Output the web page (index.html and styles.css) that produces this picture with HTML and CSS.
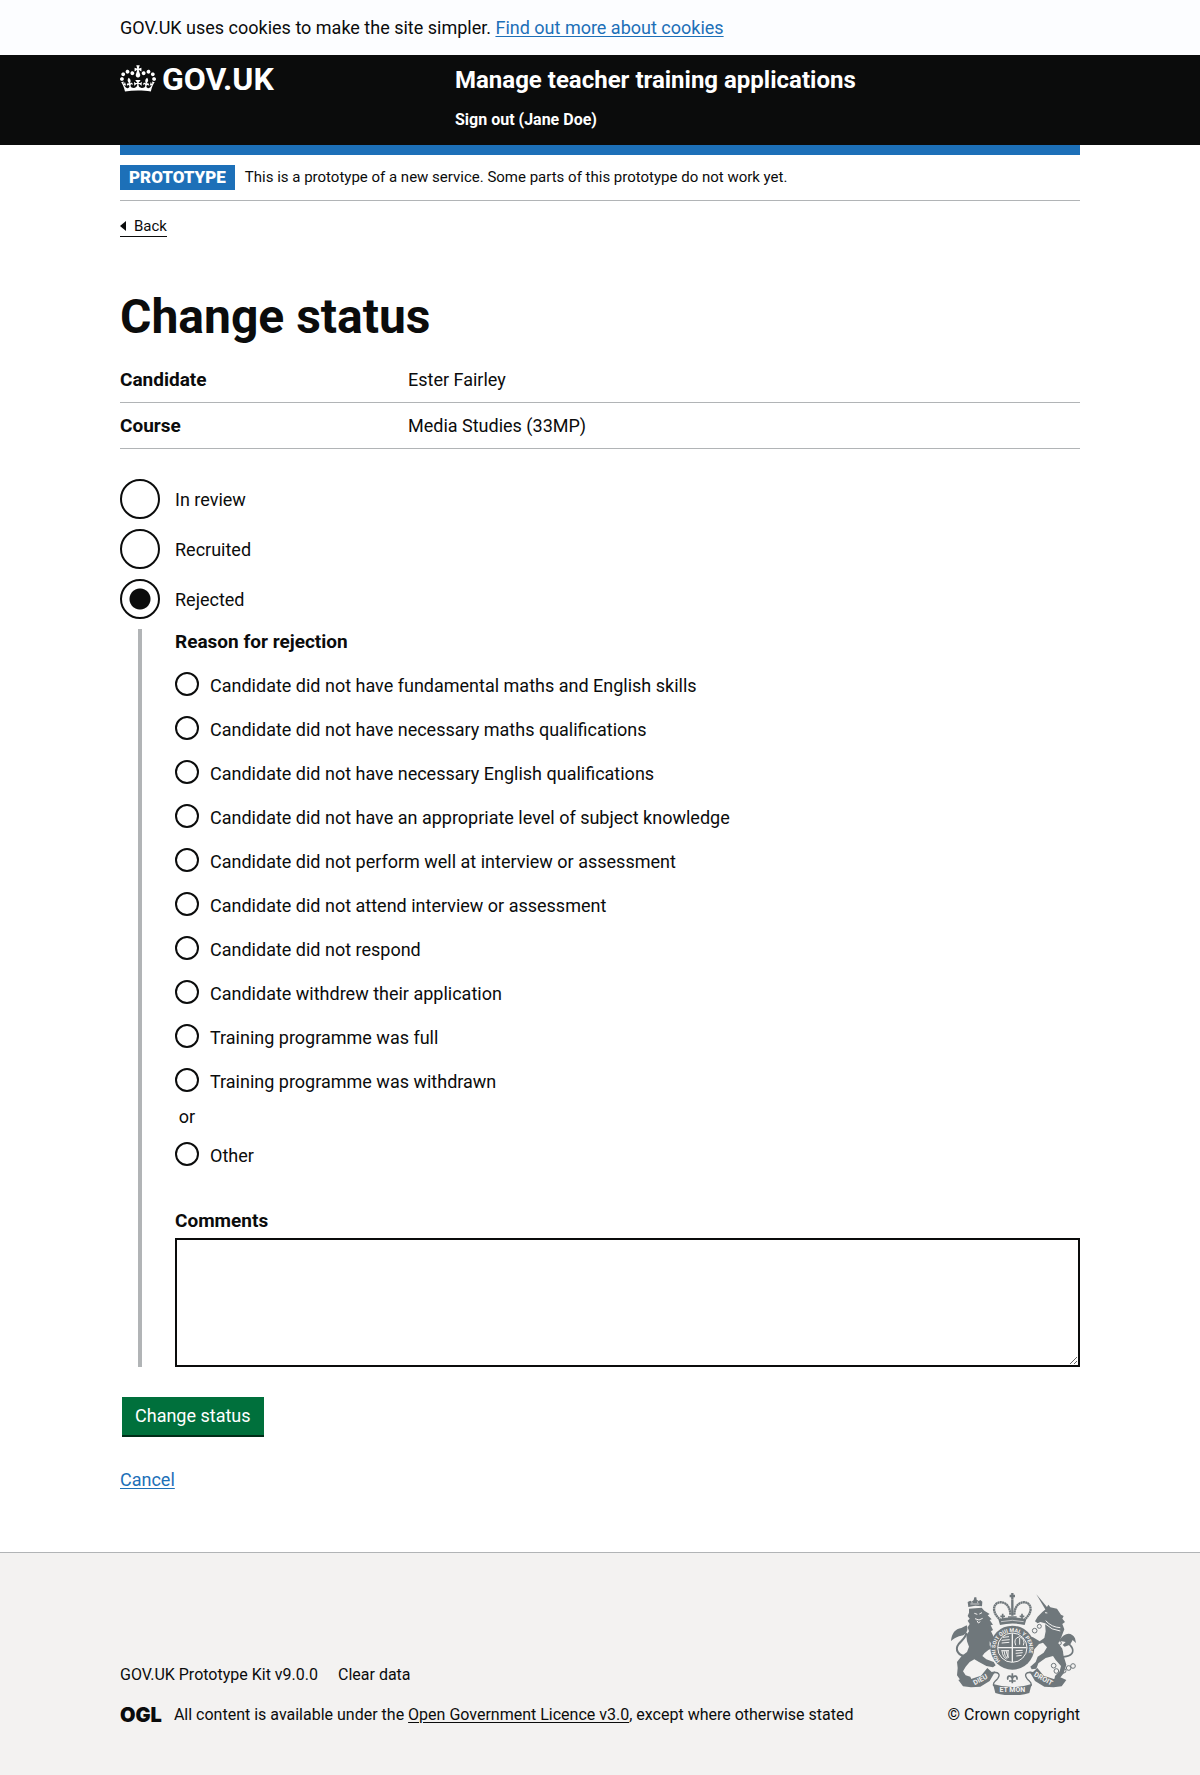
FILE: index.html
```html
<!DOCTYPE html>
<html lang="en">
<head>
<meta charset="utf-8">
<meta name="viewport" content="width=device-width, initial-scale=1">
<title>Change status - Manage teacher training applications</title>
<link rel="stylesheet" href="styles.css">
</head>
<body>
<div class="cookie-banner">
  <p class="container">GOV.UK uses cookies to make the site simpler. <a class="link" href="#cookies">Find out more about cookies</a></p>
</div>

<header class="header">
  <div class="container header-inner">
    <a class="logo" href="#home">
      <svg class="logo-crown" viewBox="0 0 132 97" aria-hidden="true"><path fill="currentColor" fill-rule="evenodd" d="M25 30.2c3.5 1.5 7.7-.2 9.1-3.7 1.5-3.6-.2-7.8-3.9-9.2-3.6-1.4-7.6.3-9.1 3.9-1.4 3.5.3 7.5 3.9 9zM9 39.5c3.6 1.5 7.8-.2 9.2-3.7 1.5-3.6-.2-7.8-3.9-9.1-3.6-1.5-7.6.2-9.1 3.8-1.4 3.5.3 7.5 3.8 9zM4.4 57.2c3.5 1.5 7.7-.2 9.1-3.8 1.5-3.6-.2-7.7-3.9-9.1-3.5-1.5-7.6.3-9.1 3.8-1.4 3.5.3 7.6 3.9 9.1zm38.3-21.4c3.5 1.5 7.7-.2 9.1-3.8 1.5-3.6-.2-7.7-3.9-9.1-3.6-1.5-7.6.3-9.1 3.8-1.3 3.6.4 7.7 3.9 9.1zm64.4-5.6c-3.6 1.5-7.8-.2-9.1-3.7-1.5-3.6.2-7.8 3.8-9.2 3.6-1.4 7.7.3 9.2 3.9 1.3 3.5-.4 7.5-3.9 9zm15.9 9.3c-3.6 1.5-7.7-.2-9.1-3.7-1.5-3.6.2-7.8 3.7-9.1 3.6-1.5 7.7.2 9.2 3.8 1.5 3.5-.3 7.5-3.8 9zm4.7 17.7c-3.6 1.5-7.8-.2-9.2-3.8-1.5-3.6.2-7.7 3.9-9.1 3.6-1.5 7.7.3 9.2 3.8 1.3 3.5-.4 7.6-3.9 9.1zM89.3 35.8c-3.6 1.5-7.8-.2-9.2-3.8-1.4-3.6.2-7.7 3.9-9.1 3.6-1.5 7.7.3 9.2 3.8 1.4 3.6-.3 7.7-3.9 9.1zM69.7 17.7l8.9 4.7V9.3l-8.9 2.8c-.2-.3-.5-.6-.9-.9L72.4 0H59.6l3.5 11.2c-.3.3-.6.5-.9.9l-8.8-2.8v13.1l8.8-4.7c.3.3.6.7.9.9l-5 15.4v.1c-.2.8-.4 1.6-.4 2.4 0 4.1 3.1 7.5 7 8.1h.2c.3 0 .7.1 1 .1.4 0 .7 0 1-.1h.2c4-.6 7.1-4.1 7.1-8.1 0-.8-.1-1.7-.4-2.4V34l-5.1-15.4c.4-.2.7-.6 1-.9zM66 92.8c16.9 0 32.8 1.1 47.1 3.2 4-16.9 8.9-26.7 14-33.5l-9.6-3.4c1 4.9 1.1 7.2 0 10.2-1.5-1.4-3-4.3-4.2-8.7L108.6 76c2.8-2 5-3.2 7.5-3.3-4.4 9.4-10 11.9-13.6 11.2-4.3-.8-6.3-4.6-5.6-7.9 1-4.7 5.7-5.9 8-.5 4.3-8.7-3-11.4-7.6-8.8 7.1-7.2 7.9-13.5 2.1-21.1-8 6.1-8.1 12.3-4.5 20.8-4.7-5.4-12.1-2.5-9.5 6.2 3.4-5.2 7.9-2 7.2 3.1-.6 4.3-6.4 7.8-13.5 7.2-10.3-.9-10.9-8-11.2-13.8 2.5-.5 7.1 1.8 11 7.3L80.2 60c-4.1 4.4-8 5.3-12.3 5.4 1.4-4.4 8-11.6 8-11.6H55.5s6.4 7.2 7.9 11.6c-4.2-.1-8-1-12.3-5.4l1.4 16.4c3.9-5.5 8.5-7.7 10.9-7.3-.3 5.8-.9 12.8-11.1 13.8-7.2.6-12.9-2.9-13.5-7.2-.7-5 3.8-8.3 7.1-3.1 2.7-8.7-4.6-11.6-9.4-6.2 3.7-8.5 3.6-14.7-4.6-20.8-5.8 7.6-5 13.9 2.2 21.1-4.7-2.6-11.9.1-7.7 8.8 2.3-5.5 7.1-4.2 8.1.5.7 3.3-1.3 7.1-5.7 7.9-3.5.7-9-1.8-13.5-11.2 2.5.1 4.7 1.3 7.5 3.3l-4.7-15.4c-1.2 4.4-2.7 7.2-4.3 8.7-1.1-3-.9-5.3 0-10.2l-9.5 3.4c5 6.9 9.9 16.7 14 33.5 14.8-2.1 30.8-3.2 47.7-3.2z"/></svg>
      <span>GOV.UK</span>
    </a>
    <div class="header-content">
      <a class="service-name" href="#service">Manage teacher training applications</a>
      <nav><a class="sign-out" href="#sign-out">Sign out (Jane Doe)</a></nav>
    </div>
  </div>
</header>

<div class="container">
  <div class="phase-banner">
    <strong class="tag">PROTOTYPE</strong>
    <span>This is a prototype of a new service. Some parts of this prototype do not work yet.</span>
  </div>
  <a class="back-link" href="#back">Back</a>

  <main class="main">
    <h1 class="heading">Change status</h1>
    <dl class="summary">
      <div class="summary-row"><dt>Candidate</dt><dd>Ester Fairley</dd></div>
      <div class="summary-row"><dt>Course</dt><dd>Media Studies (33MP)</dd></div>
    </dl>

    <form action="#" method="post">
      <div class="radios">
        <div class="radio"><input type="radio" name="status" id="in-review"><label for="in-review">In review</label></div>
        <div class="radio"><input type="radio" name="status" id="recruited"><label for="recruited">Recruited</label></div>
        <div class="radio"><input type="radio" name="status" id="rejected" checked><label for="rejected">Rejected</label></div>
      </div>

      <div class="conditional">
        <fieldset class="reasons">
          <legend class="label-bold">Reason for rejection</legend>
          <div class="radio radio-small"><input type="radio" name="reason" id="reason-1"><label for="reason-1">Candidate did not have fundamental maths and English skills</label></div>
          <div class="radio radio-small"><input type="radio" name="reason" id="reason-2"><label for="reason-2">Candidate did not have necessary maths qualifications</label></div>
          <div class="radio radio-small"><input type="radio" name="reason" id="reason-3"><label for="reason-3">Candidate did not have necessary English qualifications</label></div>
          <div class="radio radio-small"><input type="radio" name="reason" id="reason-4"><label for="reason-4">Candidate did not have an appropriate level of subject knowledge</label></div>
          <div class="radio radio-small"><input type="radio" name="reason" id="reason-5"><label for="reason-5">Candidate did not perform well at interview or assessment</label></div>
          <div class="radio radio-small"><input type="radio" name="reason" id="reason-6"><label for="reason-6">Candidate did not attend interview or assessment</label></div>
          <div class="radio radio-small"><input type="radio" name="reason" id="reason-7"><label for="reason-7">Candidate did not respond</label></div>
          <div class="radio radio-small"><input type="radio" name="reason" id="reason-8"><label for="reason-8">Candidate withdrew their application</label></div>
          <div class="radio radio-small"><input type="radio" name="reason" id="reason-9"><label for="reason-9">Training programme was full</label></div>
          <div class="radio radio-small"><input type="radio" name="reason" id="reason-10"><label for="reason-10">Training programme was withdrawn</label></div>
          <div class="divider">or</div>
          <div class="radio radio-small"><input type="radio" name="reason" id="reason-other"><label for="reason-other">Other</label></div>
        </fieldset>
        <label class="label-bold" for="comments">Comments</label>
        <textarea class="textarea" id="comments" name="comments" rows="5"></textarea>
      </div>

      <button class="button" type="submit">Change status</button>
      <p class="cancel"><a class="link" href="#cancel">Cancel</a></p>
    </form>
  </main>
</div>

<footer class="footer">
  <div class="container footer-inner">
    <div class="footer-meta">
      <ul class="footer-links">
        <li><a href="#kit">GOV.UK Prototype Kit v9.0.0</a></li>
        <li><a href="#clear">Clear data</a></li>
      </ul>
      <div class="licence">
        <span class="ogl">OGL</span>
        <span>All content is available under the <a class="underlined" href="#licence">Open Government Licence v3.0</a>, except where otherwise stated</span>
      </div>
    </div>
    <a class="copyright" href="#copyright">
      <svg class="crest" viewBox="12 15 375 306" aria-hidden="true">
        <defs>
          <path id="garter" d="M160 219A51 51 0 1 1 232 219"/>
        </defs>
        <g class="crest-fill">
          <!-- lion -->
          <path d="M66 62L104 59 112 68 128 78 122 82 134 94 128 96 138 110 131 112 138 126 132 130 140 146 146 150 150 164 143 178 134 170 128 160 128 172 132 182 124 186 112 196 106 204 118 214 140 222 146 232 138 238 118 234 96 222 82 214 68 222 56 236 48 250 56 262 70 266 74 276 56 282 40 276 30 262 32 240 30 222 44 204 60 192 66 176 60 160 58 142 66 130 62 118 68 108 62 98 68 92 62 84 66 74z"/>
          <path d="M64 57l-2-15 8-4 4 3 6-5 2-8h6l1 7 6 4 5-3 6 5-1 14-20-2z"/>
          <path d="M12 159c2-23 13-37 31-39l16-8c5 10 2 23-10 30l-13 3c-10 4-16 8-24 14z"/>
          <!-- unicorn -->
          <path d="M268 19L303 61 296 66z"/>
          <path d="M296 64L304 50 310 58 330 62 342 80 350 84 346 92 354 102 346 108 352 124 342 150 334 166 346 182 350 204 358 230 350 256 336 274 322 276 324 264 338 250 342 234 326 216 318 204 296 210 274 226 268 242 254 244 250 236 266 222 272 206 290 194 300 178 288 164 276 168 262 184 252 178 258 164 246 154 236 158 230 150 240 142 258 148 278 160 292 150 296 130 294 106 280 102 272 106 264 100 272 86 286 72z"/>
          <path d="M336 158c16-26 38-27 48-7l3 14-10-9-8 14-16 6-6-5 9-9z"/>
        </g>
        <g class="crest-line">
          <path d="M62 205c-28 1-40-20-27-37 11-13 23-21 23-34" stroke-width="6"/>
          <path d="M339 207c29 0 43-9 37-26-7-17-23-16-14-28" stroke-width="5"/>
          <g stroke-width="3">
            <circle cx="320" cy="233" r="7"/><circle cx="328" cy="249" r="7"/><circle cx="350" cy="248" r="7"/><circle cx="365" cy="240" r="7"/><circle cx="378" cy="234" r="7"/>
            <circle cx="277" cy="115" r="6"/><circle cx="337" cy="165" r="6"/><circle cx="341" cy="193" r="6"/><circle cx="263" cy="128" r="7"/>
          </g>
        </g>
        <g class="crest-light">
          <path d="M82 76l9 3M97 78l8-4M84 92l12 4 11-5M90 98l4 7 6-4" stroke-width="3"/>
          <path d="M294 74l7 1M296 98q18 20 44 21M294 107q20 20 46 22" stroke-width="3"/>
          <path d="M70 48h27M75 42v4M92 40v5" stroke-width="2"/>
        </g>
        <!-- royal crown -->
        <g class="crest-line">
          <path d="M162 97c-39-31-16-65 11-51 12 6 17 20 17 35M230 97c39-31 16-65-11-51-12 6-17 20-17 35" stroke-width="7" stroke-dasharray="6 1"/>
          <path d="M196 15v18M188 24h16M196 34v49" stroke-width="7"/>
          <path d="M167 77v17M160 85h14M225 77v17M218 85h14M183 87h26" stroke-width="5"/>
        </g>
        <path class="crest-fill" d="M154 94q42-12 84 0l-5 17q-37-9-74 0z"/>
        <path class="crest-light" d="M162 101q34-8 68 0" stroke-width="2"/>
        <!-- garter and shield -->
        <circle class="crest-fill" cx="196" cy="179" r="66"/>
        <circle class="crest-light" cx="196" cy="179" r="44" stroke-width="3"/>
        <text class="garter-text"><textPath href="#garter">HONI SOIT QUI MAL Y PENSE</textPath></text>
        <path class="crest-light" d="M196 136v86M153 179h86" stroke-width="4"/>
        <path class="crest-light" d="M164 157l24-2M164 165l23-2M168 148l18-2M206 172q-8-22 12-26 18 8 11 26M218 150v20M163 188l23 0M165 188q2 20 14 25M171 188q1 16 10 23M177 188l7 22M183 188v20M206 188l21-1M206 196l21-2M208 204l16-2" stroke-width="3"/>
        <!-- ribbon -->
        <path class="crest-fill" d="M34 276l18-8 20 5 30-10 19-23 13 12 11-2-17 29-28 17-28 2-24-3zM358 276l-18-8-20 5-30-10-19-23-13 12-11-2 17 29 28 17 28 2 24-3z"/>
        <path class="crest-fill" d="M138 288q58 18 116 0l-7 27q-51 15-102 0z"/>
        <path class="crest-line" d="M136 255c19-5 25 5 16 17-8 10-16 10-12 22M256 255c-19-5-25 5-16 17 8 10 16 10 12 22" stroke-width="4"/>
        <path class="crest-line" d="M196 256v30M186 279h20M196 272c-4-13-18-8-13 3M196 272c4-13 18-8 13 3" stroke-width="5"/>
        <g class="motto">
          <text x="196" y="313">ET MON</text>
          <text transform="translate(103 281) rotate(-28)">DIEU</text>
          <text transform="translate(286 278) rotate(29)">DROIT</text>
        </g>
      </svg>
      <span>© Crown copyright</span>
    </a>
  </div>
</footer>
</body>
</html>
```
FILE: styles.css
```css
* {
  box-sizing: border-box;
}

html {
  background: #f3f2f1;
}

body {
  margin: 0;
  background: #fff;
  color: #0b0c0c;
  font-family: Roboto, "Liberation Sans", sans-serif;
  font-size: 18px;
  line-height: 25px;
}

.container {
  max-width: 960px;
  margin: 0 auto;
}

.link {
  color: #1d70b8;
  text-underline-offset: 2px;
}

/* Banner and header */
.cookie-banner {
  padding: 15px 0;
  background: #fcfdff;
}

.header {
  background: linear-gradient(#0b0c0c, #0b0c0c) top / 100% calc(100% - 10px) no-repeat;
  color: #fff;
}

.header a {
  color: inherit;
  text-decoration: none;
}

.header-inner {
  display: flex;
  padding: 10px 0 15px;
  border-bottom: 10px solid #1d70b8;
}

.logo {
  display: flex;
  flex: 0 0 335px;
  gap: 6px;
  height: 28px;
  font-size: 32px;
  font-weight: 700;
  line-height: 28px;
}

.logo-crown {
  width: 36px;
  height: 27px;
}

.header-content {
  display: flex;
  flex-direction: column;
  gap: 15px;
}

.service-name {
  font-size: 24px;
  font-weight: 700;
  line-height: 30px;
}

.sign-out {
  display: block;
  font-size: 16px;
  font-weight: 700;
  line-height: 20px;
}

/* Page body */
.phase-banner {
  display: flex;
  align-items: center;
  gap: 10px;
  padding: 10px 0;
  border-bottom: 1px solid #b1b4b6;
  font-size: 15px;
}

.tag {
  padding: 0 9px;
  background: #1d70b8;
  color: #fff;
  font-size: 17px;
  font-weight: 900;
}

.back-link {
  display: inline-flex;
  align-items: center;
  gap: 8px;
  margin-top: 15px;
  border-bottom: 1px solid #0b0c0c;
  color: inherit;
  font-size: 15px;
  line-height: 20px;
  text-decoration: none;
}

.back-link::before {
  content: "";
  border: solid transparent;
  border-width: 5px 6px 5px 0;
  border-right-color: #0b0c0c;
}

.main {
  padding: 55px 0 60px;
}

.heading {
  margin: 0 0 15px;
  font-size: 48px;
  line-height: 50px;
}

.summary {
  margin: 0 0 30px;
}

.summary-row {
  display: flex;
  padding: 10px 0;
  border-bottom: 1px solid #b1b4b6;
}

.summary-row dt {
  width: 30%;
  font-size: 19px;
  font-weight: 700;
}

.summary-row dd {
  margin: 0;
}

/* Radios */
.radios {
  display: grid;
  gap: 10px;
  margin-bottom: 10px;
}

.radio {
  display: flex;
  align-items: center;
  gap: 15px;
}

.radio input {
  flex: none;
  width: 40px;
  height: 40px;
  margin: 0;
  border: 2px solid #0b0c0c;
  border-radius: 50%;
  appearance: none;
  background: #fff;
}

.radio input:checked {
  background: radial-gradient(circle, #0b0c0c 10px, #fff 11px);
}

.radio-small {
  gap: 11px;
  height: 44px;
}

.radio-small input {
  width: 24px;
  height: 24px;
}

.radio-small label {
  padding-top: 2px;
}

.conditional {
  margin: 0 0 30px 18px;
  padding-left: 33px;
  border-left: 4px solid #b1b4b6;
}

.label-bold {
  display: block;
  padding: 0;
  font-size: 19px;
  font-weight: 700;
}

.reasons {
  min-width: 0;
  margin: 0 0 32px;
  padding: 0;
  border: 0;
}

.reasons .label-bold {
  margin-bottom: 8px;
}

.divider {
  width: 24px;
  height: 30px;
  padding-top: 2px;
  text-align: center;
}

.textarea {
  display: block;
  width: 100%;
  height: 129px;
  margin-top: 5px;
  padding: 5px;
  border: 2px solid #0b0c0c;
  background: #fff;
  font: inherit;
  resize: vertical;
}

.button {
  display: block;
  margin: 0 0 32px 2px;
  padding: 6px 13px 7px;
  border: 0;
  box-shadow: 0 2px 0 #002d18;
  background: #00703c;
  color: #fff;
  font: inherit;
}

.cancel,
.cookie-banner p {
  margin-top: 0;
  margin-bottom: 0;
}

/* Footer */
.footer {
  padding: 40px 0 50px;
  border-top: 1px solid #b1b4b6;
  background: #f3f2f1;
  font-size: 16px;
  line-height: 20px;
}

.footer a {
  color: inherit;
  text-decoration: none;
}

.footer .underlined {
  text-decoration: underline;
  text-underline-offset: 2px;
}

.footer-inner {
  display: flex;
  align-items: flex-end;
  justify-content: space-between;
}

.footer-links {
  display: flex;
  gap: 20px;
  margin: 0 0 20px;
  padding: 0;
  list-style: none;
}

.licence {
  display: flex;
  align-items: center;
  gap: 12px;
}

.ogl {
  font-family: Inter, sans-serif;
  font-size: 20px;
  font-weight: 900;
}

.copyright {
  display: flex;
  flex-direction: column;
  align-items: center;
  gap: 10px;
}

.crest {
  width: 125px;
  height: 102px;
}

.crest-fill {
  fill: #6f777b;
}

.crest-line {
  fill: none;
  stroke: #6f777b;
}

.crest-light {
  fill: none;
  stroke: #f3f2f1;
}

.garter-text,
.motto {
  fill: #f3f2f1;
  font-size: 16px;
  font-weight: 700;
}

.motto {
  font-size: 21px;
  text-anchor: middle;
}
```
